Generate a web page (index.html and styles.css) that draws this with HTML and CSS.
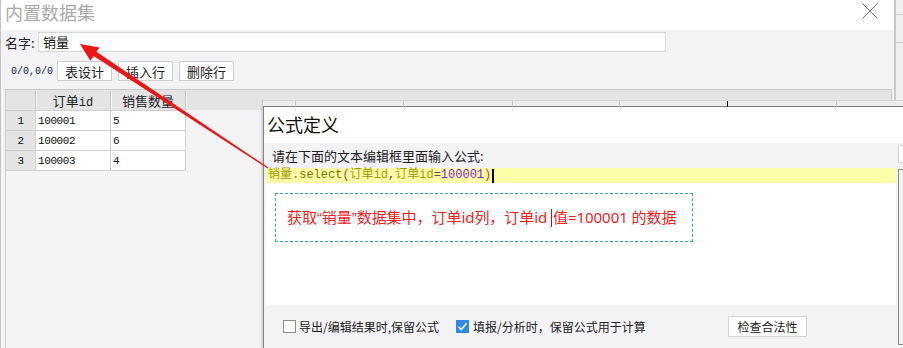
FILE: index.html
```html
<!DOCTYPE html>
<html lang="zh">
<head>
<meta charset="utf-8">
<title>内置数据集</title>
<link rel="stylesheet" href="styles.css">
</head>
<body>
<div class="screen">
  <div class="ds-dialog">
    <div class="ds-title">
      <span class="ds-title-text">内置数据集</span>
      <svg class="close" width="16" height="16" viewBox="0 0 16 16"><path d="M0.5 0.5 L15.5 15.5 M15.5 0.5 L0.5 15.5" stroke="#777" stroke-width="1" fill="none"/></svg>
    </div>
    <div class="ds-body">
      <div class="name-row">
        <span class="name-label">名字:</span>
        <div class="name-input">销量</div>
      </div>
      <div class="toolbar">
        <span class="pos">0/0,0/0</span>
        <span class="btn">表设计</span>
        <span class="btn">插入行</span>
        <span class="btn">删除行</span>
      </div>
      <div class="grid">
        <div class="grid-head">
          <div class="hc rn"></div>
          <div class="hc c1"><span>订单<span class="mono">id</span></span></div>
          <div class="hc c2"><span>销售数量</span></div>
        </div>
        <div class="grid-row">
          <div class="rc rn mono">1</div>
          <div class="rc c1 mono">100001</div>
          <div class="rc c2 mono">5</div>
        </div>
        <div class="grid-row">
          <div class="rc rn mono">2</div>
          <div class="rc c1 mono">100002</div>
          <div class="rc c2 mono">6</div>
        </div>
        <div class="grid-row">
          <div class="rc rn mono">3</div>
          <div class="rc c1 mono">100003</div>
          <div class="rc c2 mono">4</div>
        </div>
      </div>
    </div>
  </div>
  <div class="side-edge"></div>

  <div class="formula">
    <div class="strip">
      <span class="sep" style="left:32px"></span>
      <span class="sep" style="left:140px"></span>
      <span class="sep" style="left:249px"></span>
      <span class="sep" style="left:356px"></span>
      <span class="sep dark" style="left:464px"></span>
      <span class="sep" style="left:573px"></span>
    </div>
    <div class="f-dialog">
      <div class="f-title">公式定义</div>
      <div class="f-body">
        <div class="f-main">
          <div class="f-label">请在下面的文本编辑框里面输入公式:</div>
          <div class="editor">
            <div class="code"><span class="t-cn">销量</span><span class="t-fn">.select</span><span class="t-p">(</span><span class="t-cn">订单id</span><span class="t-op">,</span><span class="t-cn">订单id</span><span class="t-op">=</span><span class="t-num">100001</span><span class="t-p">)</span><span class="caret"></span></div>
            <div class="note">获取<span class="q">“</span>销量<span class="q">”</span>数据集中，订单<span class="lat">id</span>列，订单<span class="lat">id </span><span class="note-caret"></span>值<span class="lat">=100001 </span>的数据</div>
          </div>
          <div class="f-bottom">
            <div class="opt opt1"><span class="chk"></span><span>导出/编辑结果时,保留公式</span></div>
            <div class="opt opt2"><span class="chk on"><svg width="13" height="13" viewBox="0 0 13 13"><path d="M2.5 6.8 L5.3 9.6 L10.6 3.2" stroke="#fff" stroke-width="1.6" fill="none"/></svg></span><span>填报/分析时，保留公式用于计算</span></div>
            <span class="btn check-btn">检查合法性</span>
          </div>
        </div>
        <div class="f-side">
          <div class="side-small"></div>
          <div class="side-big"></div>
        </div>
      </div>
    </div>
  </div>

  <svg class="arrow" width="903" height="348" viewBox="0 0 903 348">
    <polygon points="80,44 99.6,47.4 96.4,51.8 268.3,167.4 267.7,168.6 93.6,56 90.4,60.8" fill="#ee1515"/>
  </svg>
</div>
</body>
</html>
```

FILE: styles.css
```css
* { box-sizing: border-box; }
html, body { margin: 0; padding: 0; background: #f3f3f5; }
body { font-family: "Noto Sans CJK SC", "Noto Sans", sans-serif; color: #222; }

.screen {
  position: relative;
  width: 903px;
  height: 348px;
  overflow: hidden;
  display: flex;
  background: #f3f3f5;
}

.mono { font-family: "Liberation Mono", "Noto Sans CJK SC", monospace; }

/* background dialog */
.ds-dialog {
  width: 896px;
  height: 348px;
  display: flex;
  flex-direction: column;
  border-left: 1px solid #c4c4c4;
  border-right: 2px solid #c8c8c8;
}
.ds-title {
  height: 30px;
  flex: none;
  background: #fff;
  display: flex;
  align-items: flex-start;
  padding-left: 4px;
}
.ds-title-text {
  font-size: 18px;
  line-height: 24px;
  color: #a9a9a9;
}
.close { margin-left: auto; margin-right: 16px; margin-top: 3px; }

.ds-body {
  flex: 1;
  display: flex;
  flex-direction: column;
  padding-left: 4px;
  background: #f3f3f5;
}
.name-row {
  margin-top: 2px;
  height: 20px;
  display: flex;
  align-items: center;
}
.name-label { width: 33px; font-size: 13px; color: #222; }
.name-input {
  width: 628px;
  height: 20px;
  background: #fff;
  border: 1px solid #d8d8d8;
  font-size: 13px;
  line-height: 18px;
  padding-left: 4px;
  color: #111;
}
.toolbar {
  margin-top: 9px;
  height: 20px;
  display: flex;
  align-items: center;
}
.pos {
  width: 52px;
  padding-left: 6px;
  font-family: "Liberation Mono", monospace;
  font-size: 10px;
  color: #102040;
}
.btn {
  display: inline-flex;
  align-items: center;
  justify-content: center;
  height: 20px;
  width: 55px;
  margin-right: 6px;
  background: #fff;
  border: 1px solid #d0d0d0;
  font-size: 13px;
  color: #222;
}

.grid {
  margin-top: 8px;
  margin-right: 2px;
  flex: 1;
  border-top: 1px solid #cacaca;
  border-left: 1px solid #cacaca;
  border-right: 1px solid #cacaca;
  background: #f4f4f6;
}
.grid-head {
  height: 20px;
  display: flex;
  background: #e4e4e4;
}
.hc {
  height: 20px;
  display: flex;
  align-items: center;
  justify-content: center;
  font-size: 13px;
  color: #222;
  border-right: 1px solid #c8c8c8;
  box-shadow: 1px 0 0 #f4f4f4;
}
.hc .mono { font-size: 12px; }
.rn { width: 30px; }
.c1 { width: 75px; }
.c2 { width: 75px; }
.grid-row { height: 20px; display: flex; }
.rc {
  height: 20px;
  display: flex;
  align-items: center;
  font-size: 11px;
  letter-spacing: -0.4px;
  color: #111;
  background: #fff;
  border-right: 1px solid #cfcfcf;
  border-top: 1px solid #cfcfcf;
  padding-left: 2px;
}
.grid-row:last-child .rc { border-bottom: 1px solid #cfcfcf; height: 21px; }
.rc.rn { background: #e4e4e4; justify-content: center; padding-left: 0; border-right-color: #d4d4d4; }

.side-edge {
  width: 7px;
  height: 348px;
  background: linear-gradient(#f0f0f0 0 14px, #cfcfcf 14px 15px, #f0f0f0 15px 42px, #cfcfcf 42px 43px, #f0f0f0 43px);
}

/* formula dialog overlay */
.formula {
  position: absolute;
  left: 262px;
  top: 100px;
  width: 700px;
  bottom: 0;
  display: flex;
  flex-direction: column;
}
.strip {
  position: relative;
  height: 6px;
  flex: none;
  background: #ececec;
  border-top: 1px solid #d6d6d6;
  border-left: 1px solid #cfcfcf;
}
.sep {
  position: absolute;
  top: 0;
  width: 1px;
  height: 6px;
  background: #c4c4c4;
}
.sep.dark { background: #111; }
.f-dialog {
  flex: 1;
  margin-left: 1px;
  display: flex;
  flex-direction: column;
  border-left: 1px solid #8a8a8a;
  border-top: 1px solid #7a7a7a;
  box-shadow: -1px 0 2px rgba(0,0,0,0.25);
  background: #f3f3f5;
}
.f-title {
  height: 36px;
  flex: none;
  background: #fff;
  font-size: 18px;
  line-height: 34px;
  padding-left: 3px;
  color: #111;
}
.f-body {
  flex: 1;
  display: flex;
}
.f-main {
  width: 632px;
  padding-left: 2px;
  display: flex;
  flex-direction: column;
}
.f-label {
  height: 25px;
  padding-top: 3px;
  padding-left: 6px;
  font-size: 13px;
  line-height: 20px;
  color: #222;
}
.editor {
  width: 630px;
  height: 137px;
  background: #fff;
}
.code {
  height: 15px;
  background: #fefea8;
  font-family: "Liberation Mono", "Noto Sans CJK SC", monospace;
  font-size: 12px;
  line-height: 15px;
  padding-left: 2px;
  display: flex;
  align-items: center;
  white-space: pre;
}
.t-cn { color: #a39800; }
.t-fn { color: #7a7500; }
.t-p { color: #f02a2a; }
.t-op { color: #555; }
.t-num { color: #8a22d0; }
.caret { display: inline-block; width: 2px; height: 14px; background: #000; margin-left: 1px; }

.note {
  margin-top: 10px;
  margin-left: 9px;
  width: 418px;
  height: 49px;
  border: 1px dashed #3a9ae8;
  padding-left: 11px;
  font-size: 15px;
  letter-spacing: -0.05px;
  line-height: 45px;
  color: #f21c1c;
  white-space: nowrap;
}
.note .q { font-family: "Liberation Sans", sans-serif; }
.note .lat { font-family: "Noto Sans", "Liberation Sans", sans-serif; white-space: pre; }
.note-caret {
  display: inline-block;
  width: 1px;
  height: 18px;
  background: #e00;
  vertical-align: -4px;
  margin-right: 1px;
}

.f-bottom {
  margin-top: 11px;
  height: 21px;
  display: flex;
  align-items: center;
  padding-left: 17px;
  font-size: 12px;
  color: #222;
}
.opt { display: flex; align-items: center; }
.opt1 { width: 173px; }
.opt2 { width: 272px; }
.chk {
  width: 13px;
  height: 13px;
  border: 1px solid #8c8c8c;
  background: #fff;
  margin-right: 3px;
  display: inline-flex;
}
.chk.on { background: #2f8ae6; border-color: #2f8ae6; margin-right: 4px; }
.chk.on svg { margin: -1px; }
.check-btn { width: 79px; height: 21px; font-size: 12px; border-color: #d4d4d4; }

.f-side {
  margin-left: 2px;
  display: flex;
  flex-direction: column;
}
.side-small {
  margin-top: 2px;
  width: 30px;
  height: 18px;
  background: #fff;
  border: 1px solid #d6d6d6;
}
.side-big {
  margin-top: 6px;
  width: 30px;
  height: 176px;
  border: 1px solid #8a8a8a;
  background: #f3f3f5;
}

.arrow {
  position: absolute;
  left: 0;
  top: 0;
  pointer-events: none;
}
```
